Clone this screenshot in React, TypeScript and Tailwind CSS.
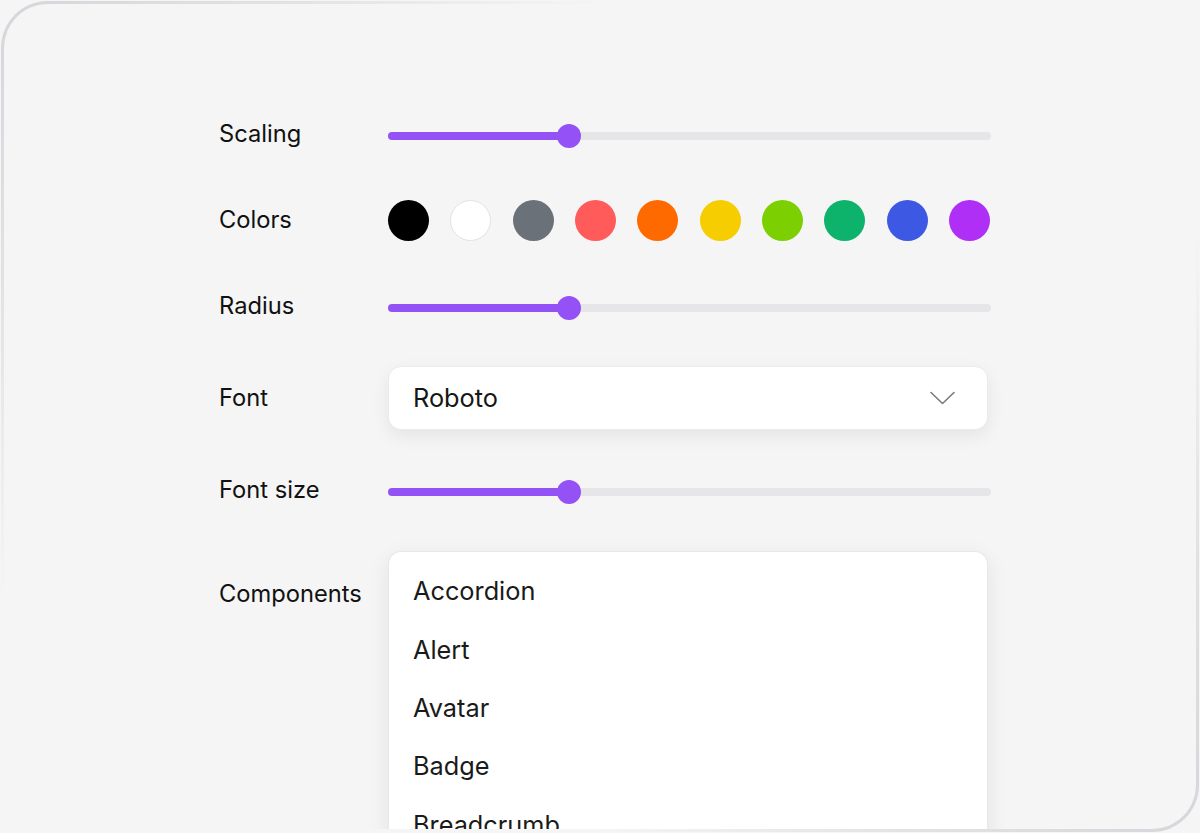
import React from 'react';

const SWATCHES = [
  'bg-black',
  'bg-white border border-[#e2e2e4]',
  'bg-[#6b7178]',
  'bg-[#ff5b5b]',
  'bg-[#ff6a00]',
  'bg-[#f5cd00]',
  'bg-[#7ccf00]',
  'bg-[#0db36b]',
  'bg-[#3d58e3]',
  'bg-[#b02ff6]',
];

const COMPONENTS = ['Accordion', 'Alert', 'Avatar', 'Badge', 'Breadcrumb', 'Button'];

const Slider: React.FC<{ value: number }> = ({ value }) => (
  <div className="w-[603px] pt-[3px]">
    <div className="relative h-[8px] w-full rounded-full bg-[#e6e6e9]">
      <div className="absolute left-0 top-0 h-full rounded-full bg-[#9452f6]" style={{ width: `${value}%` }} />
      <div
        className="absolute top-1/2 h-[24px] w-[24px] -translate-x-1/2 -translate-y-1/2 rounded-full bg-[#9452f6]"
        style={{ left: `${value}%` }}
      />
    </div>
  </div>
);

const Label: React.FC<{ children: React.ReactNode; className?: string }> = ({ children, className = '' }) => (
  <div className={`w-[169px] shrink-0 text-[23.7px] leading-[28px] text-[#111] ${className}`}>{children}</div>
);

export default function App() {
  return (
    <div className="h-[833px] w-full bg-[#f5f5f5] p-[1px] font-['Inter',sans-serif]">
      {/* frame with fading border */}
      <div className="h-full w-full rounded-[47px] bg-[linear-gradient(135deg,#d6d6da_0%,#e2e2e5_14%,#f5f5f5_30%,#f5f5f5_70%,#e2e2e5_86%,#d6d6da_100%)] p-[3px]">
        <div className="h-full w-full overflow-hidden rounded-[44px] bg-[#f5f5f5]">
          <div className="flex flex-col pl-[215px] pt-[107px]">
            <div className="flex h-[46px] items-center">
              <Label>Scaling</Label>
              <Slider value={30} />
            </div>

            <div className="mt-[40px] flex h-[46px] items-center">
              <Label>Colors</Label>
              <div className="flex w-[602px] items-center justify-between">
                {SWATCHES.map((c, i) => (
                  <div key={i} className={`h-[41px] w-[41px] rounded-full ${c}`} />
                ))}
              </div>
            </div>

            <div className="mt-[40px] flex h-[46px] items-center">
              <Label>Radius</Label>
              <Slider value={30} />
            </div>

            <div className="mt-[37px] flex h-[64px] items-center">
              <Label>Font</Label>
              <div className="flex h-[64px] w-[600px] items-center justify-between rounded-[13px] border border-[#ebebeb] bg-white pl-[24px] pr-[32px] shadow-[0_6px_18px_rgba(0,0,0,0.07)]">
                <span className="text-[25.3px] text-[#161616]">Roboto</span>
                <svg width="25" height="14" viewBox="0 0 25 14" fill="none">
                  <path d="M1 1.5 L12.5 12.5 L24 1.5" stroke="#7a7a7a" strokeWidth="1.6" strokeLinecap="round" strokeLinejoin="round" />
                </svg>
              </div>
            </div>

            <div className="mt-[37px] flex h-[46px] items-center">
              <Label>Font size</Label>
              <Slider value={30} />
            </div>

            <div className="mt-[38px] flex items-start">
              <Label className="pt-[29px]">Components</Label>
              <div className="w-[600px] rounded-t-[13px] border border-b-0 border-[#e8e8e8] bg-white pt-[10px] shadow-[0_6px_22px_rgba(0,0,0,0.08)]">
                {COMPONENTS.map((name) => (
                  <div key={name} className="flex h-[58.4px] items-center pl-[24px] text-[25.3px] text-[#1a1a1a]">
                    {name}
                  </div>
                ))}
              </div>
            </div>
          </div>
        </div>
      </div>
    </div>
  );
}
